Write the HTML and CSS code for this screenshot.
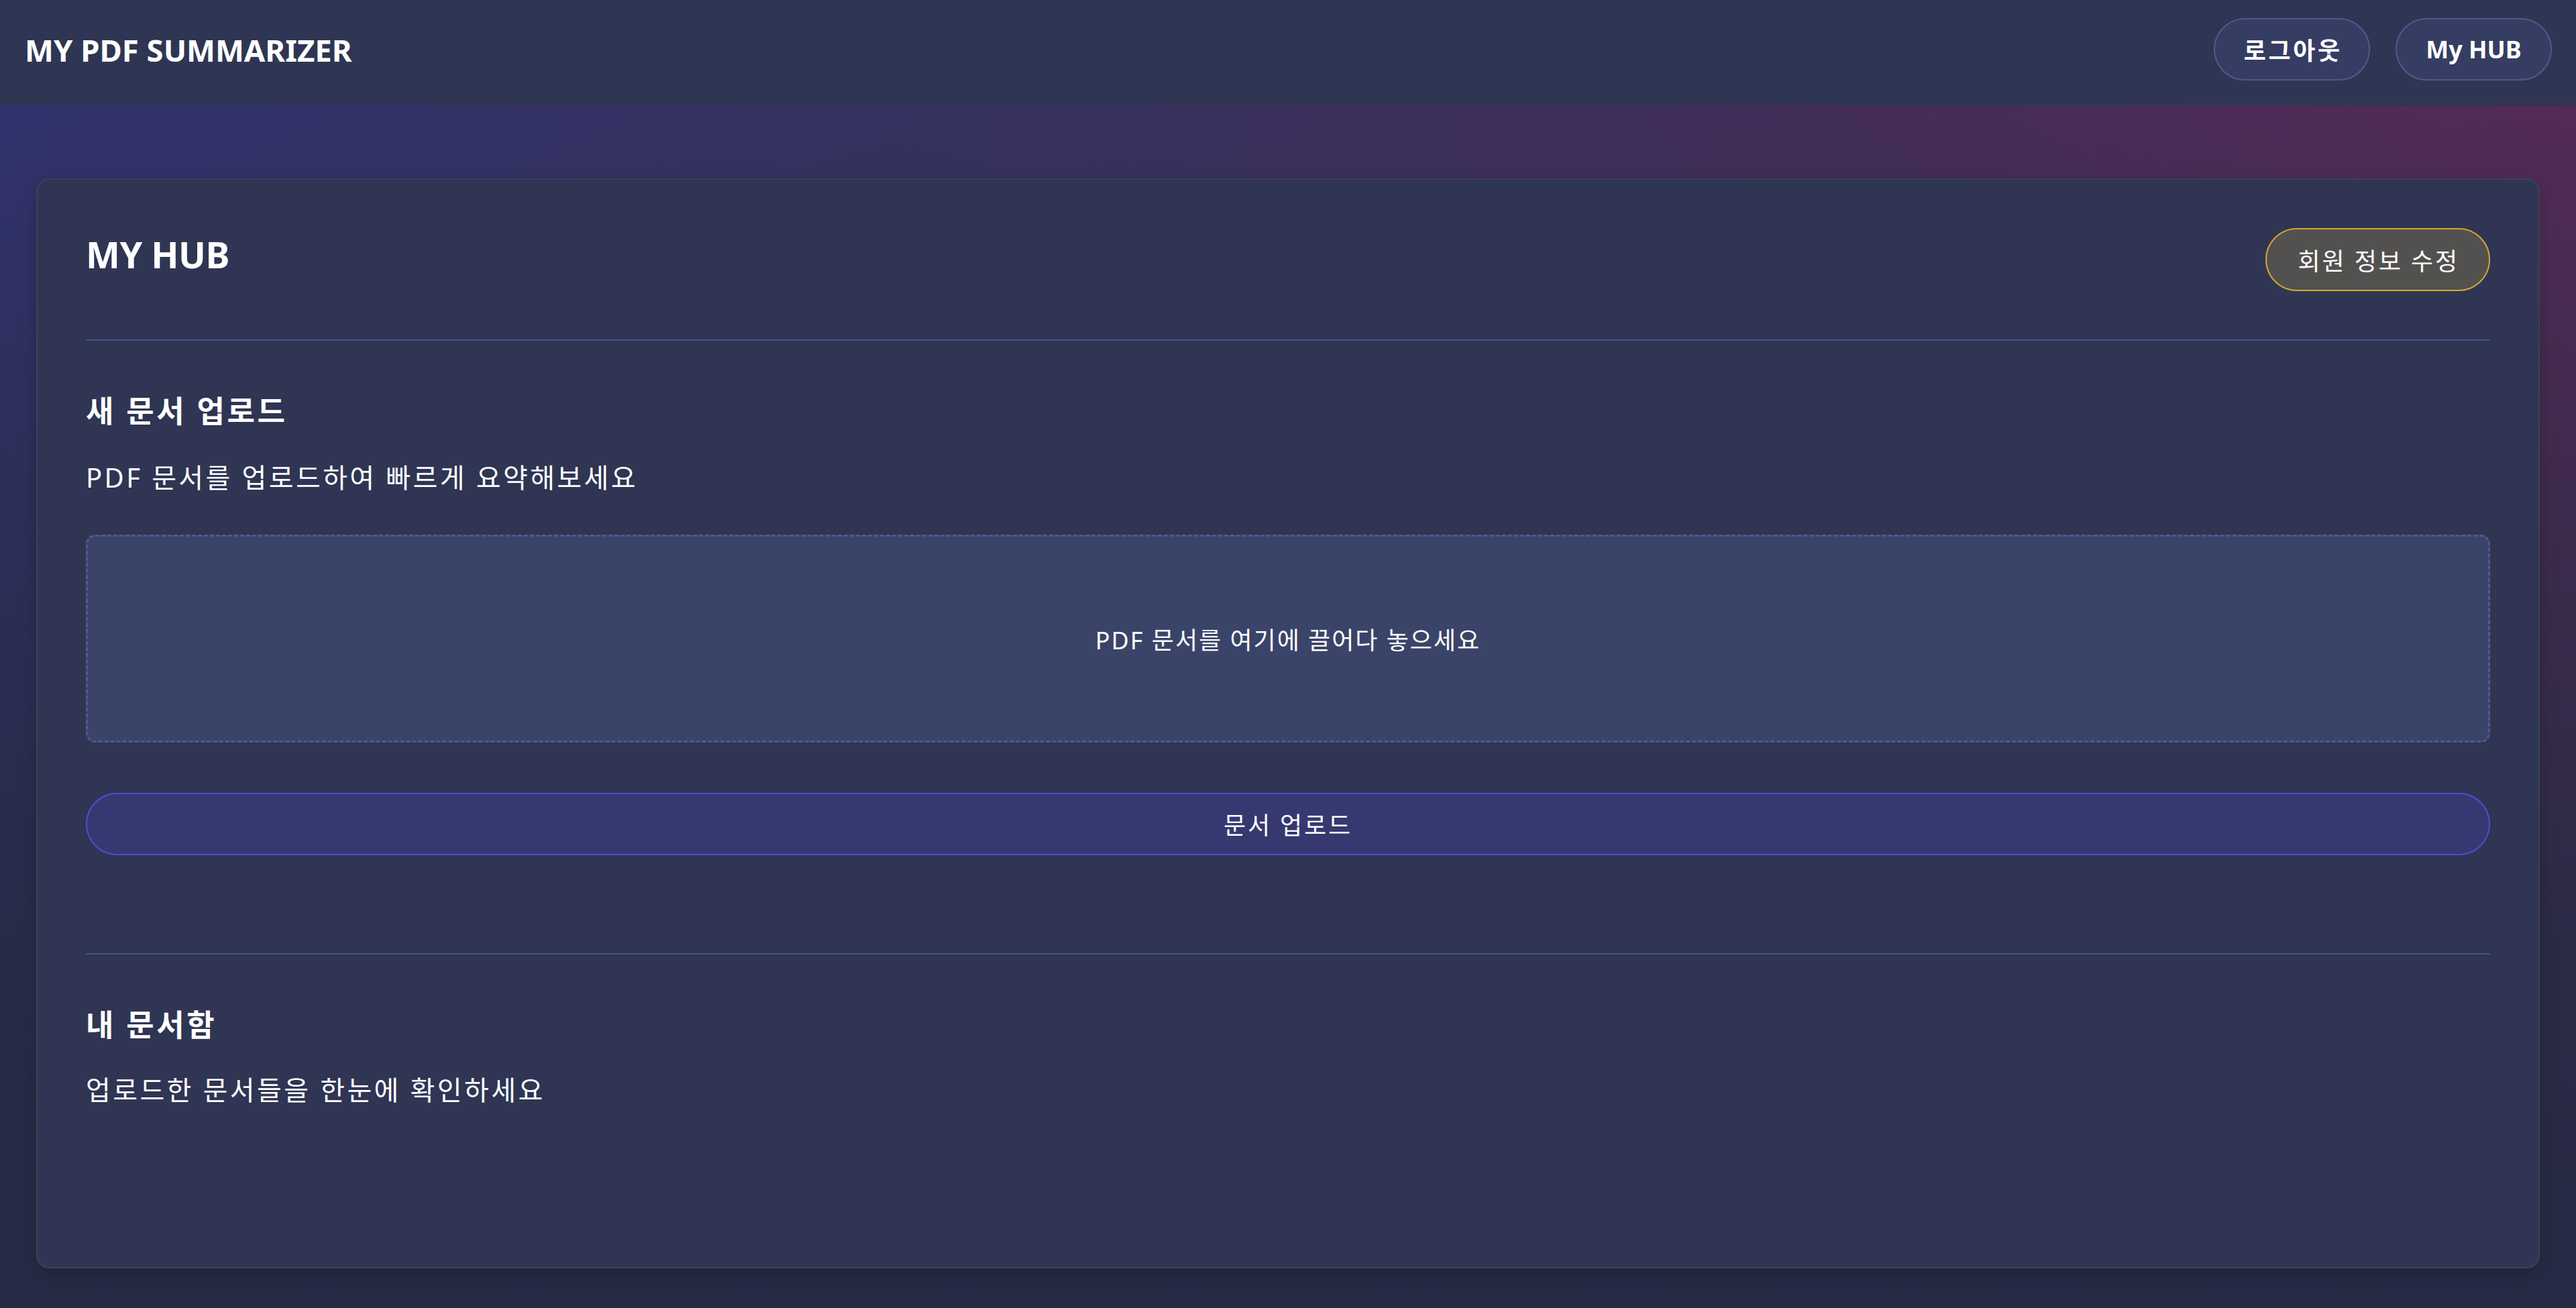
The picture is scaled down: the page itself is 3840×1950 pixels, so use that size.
FILE: index.html
```html
<!DOCTYPE html>
<html lang="ko">
<head>
<meta charset="utf-8">
<title>MY PDF SUMMARIZER</title>
<link rel="stylesheet" href="styles.css">
</head>
<body>
<header class="topbar">
  <div class="brand">MY PDF SUMMARIZER</div>
  <nav class="topnav">
    <button class="nav-btn nav-btn-ko" type="button">로그아웃</button>
    <button class="nav-btn" type="button">My HUB</button>
  </nav>
</header>
<main class="page">
  <section class="card">
    <div class="card-head">
      <h1 class="card-title">MY HUB</h1>
      <button class="edit-btn" type="button">회원 정보 수정</button>
    </div>
    <div class="section section-upload">
      <h2 class="section-title">새 문서 업로드</h2>
      <p class="section-desc">PDF 문서를 업로드하여 빠르게 요약해보세요</p>
      <div class="dropzone">PDF 문서를 여기에 끌어다 놓으세요</div>
      <button class="upload-btn" type="button">문서 업로드</button>
    </div>
    <div class="section section-docs">
      <h2 class="section-title">내 문서함</h2>
      <p class="section-desc">업로드한 문서들을 한눈에 확인하세요</p>
      <div class="doc-list"></div>
    </div>
  </section>
</main>
</body>
</html>
```

FILE: styles.css
```css
* { box-sizing: border-box; }
html, body {
  margin: 0;
  padding: 0;
}
body {
  font-family: "Noto Sans", "Noto Sans CJK KR", sans-serif;
  color: #ffffff;
  background-color: #262a44;
  min-height: 1950px;
}
.topbar {
  height: 157px;
  background: #2f3653;
  display: flex;
  align-items: center;
  justify-content: space-between;
  padding: 0 36px 10px 37px;
}
.brand {
  font-size: 45.5px;
  font-weight: 700;
}
.topnav {
  display: flex;
  gap: 38px;
}
.nav-btn {
  font-family: inherit;
  width: 233px;
  height: 93px;
  border-radius: 47px;
  border: 2px solid #4a5a8f;
  background: #363d62;
  color: #fff;
  font-size: 36px;
  font-weight: 700;
  padding: 0;
}
.nav-btn-ko {
  letter-spacing: 0.1em;
  text-indent: 0.1em;
}
.page {
  padding: 109px 54px 60px;
  background-image:
    linear-gradient(to bottom, rgba(38,42,68,0) 0%, rgba(38,42,68,0.45) 30%, rgba(38,42,68,0.9) 70%, #262a44 100%),
    linear-gradient(100deg, #31336d 0%, #36315f 35%, #452d58 70%, #582a54 100%);
}
.card {
  background: #2f3553;
  border: 2px solid #3b4258;
  border-radius: 20px;
  padding: 72px 72px;
  box-shadow: 0 8px 24px rgba(0,0,0,0.18);
}
.card-head {
  display: flex;
  align-items: center;
  justify-content: space-between;
  padding-bottom: 72px;
  border-bottom: 2px solid #45518a;
}
.card-title {
  margin: 0 0 16px;
  font-size: 54px;
  font-weight: 700;
  line-height: 1;
  letter-spacing: -0.5px;
}
.edit-btn {
  font-family: inherit;
  height: 94px;
  padding: 0 44px 0 47px;
  border-radius: 47px;
  border: 2px solid #d6a82b;
  background: #53514f;
  color: #fff;
  font-size: 36px;
  font-weight: 400;
  letter-spacing: 0.08em;
}
.section-upload {
  padding: 73px 0 146px;
}
.section-docs {
  border-top: 2px solid #45518a;
  padding-top: 73px;
}
.section-title {
  margin: 0;
  font-size: 45px;
  line-height: 63px;
  font-weight: 700;
  letter-spacing: 0.08em;
}
.section-desc {
  margin: 40px 0 0;
  font-size: 40px;
  line-height: 56px;
  font-weight: 400;
  letter-spacing: 0.085em;
}
.section-docs .section-desc {
  margin-top: 38px;
}
.dropzone {
  margin-top: 57px;
  height: 310px;
  border: 3px dashed #4e5b90;
  border-radius: 14px;
  background: #3a4468;
  display: flex;
  align-items: center;
  justify-content: center;
  font-size: 36px;
  letter-spacing: 0.055em;
}
.upload-btn {
  display: block;
  width: 100%;
  margin-top: 75px;
  height: 93px;
  border-radius: 47px;
  border: 2px solid #4e4ade;
  background: #363870;
  color: #fff;
  font-family: inherit;
  font-size: 36px;
  font-weight: 400;
  letter-spacing: 0.08em;
}
.doc-list {
  height: 164px;
}
```
